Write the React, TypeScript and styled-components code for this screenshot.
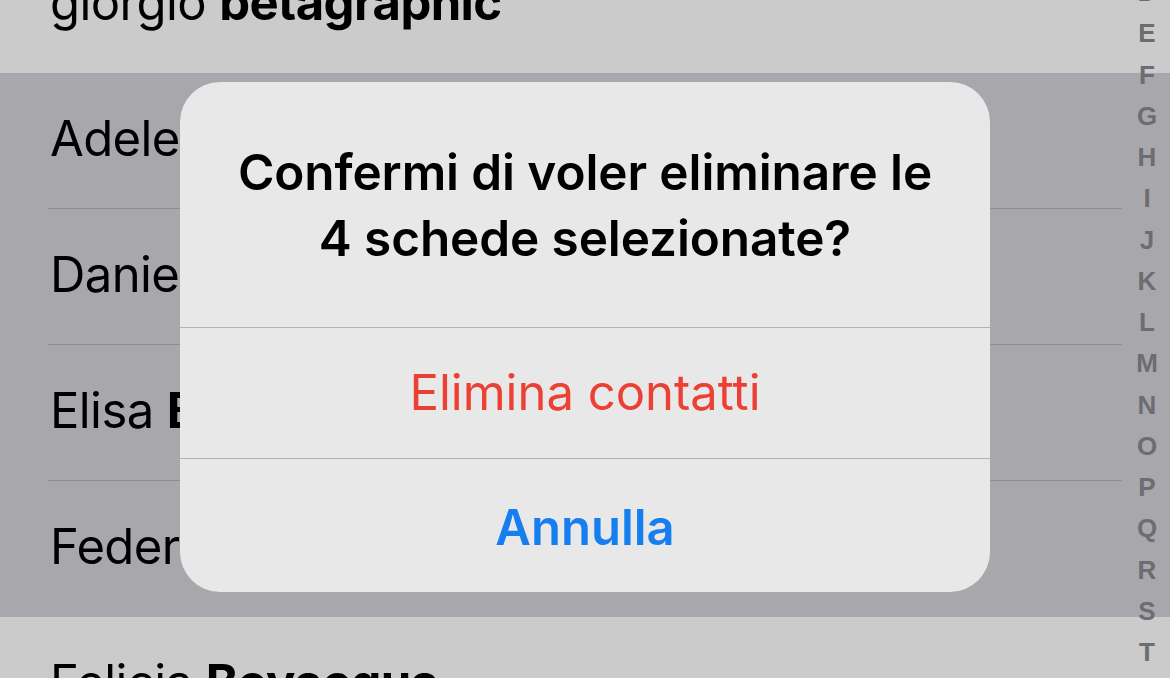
import React from "react";
import styled, { createGlobalStyle } from "styled-components";

const Global = createGlobalStyle`
  html, body { margin: 0; padding: 0; }
  body { width: 1170px; height: 678px; overflow: hidden; background: #cbcbcb; font-family: Inter, "Noto Sans", sans-serif; }
  * { box-sizing: border-box; }
`;

const Screen = styled.div`
  position: relative;
  width: 1170px;
  height: 678px;
  overflow: hidden;
  background: #cbcbcb;
`;

const List = styled.div`
  display: flex;
  flex-direction: column;
  margin-top: -63px;
`;

const Row = styled.div<{ $selected?: boolean; $divider?: boolean }>`
  position: relative;
  height: 136px;
  flex: none;
  display: flex;
  align-items: flex-start;
  padding: 41px 0 0 50px;
  background: ${(p) => (p.$selected ? "#a8a8ac" : "#cbcbcb")};
  &::after {
    content: "";
    display: ${(p) => (p.$divider ? "block" : "none")};
    position: absolute;
    left: 48px;
    right: 48px;
    bottom: 0;
    height: 1px;
    background: #8e8e92;
  }
`;

const Name = styled.span`
  font-size: 49px;
  line-height: 1;
  color: #000;
  font-weight: 400;
  white-space: nowrap;
  letter-spacing: -0.6px;
  b { font-weight: 700; }
`;

const Index = styled.div`
  position: absolute;
  top: -28px;
  right: 3px;
  width: 40px;
  display: flex;
  flex-direction: column;
  align-items: center;
`;

const Letter = styled.span`
  height: 41.25px;
  line-height: 41.25px;
  font-size: 26px;
  font-weight: 700;
  color: #6d6d71;
  font-family: "Liberation Sans", Arial, sans-serif;
`;

const Alert = styled.div`
  position: absolute;
  left: 180px;
  top: 82px;
  width: 810px;
  height: 510px;
  border-radius: 40px;
  background: #e8e8e8;
  display: flex;
  flex-direction: column;
  overflow: hidden;
`;

const Title = styled.div`
  height: 245px;
  padding: 57px 30px 0;
  text-align: center;
  font-size: 49.5px;
  line-height: 66px;
  font-weight: 600;
  color: #000;
  letter-spacing: -0.1px;
`;

const Action = styled.div<{ $tone: "destructive" | "cancel" }>`
  flex: 1;
  display: flex;
  align-items: center;
  justify-content: center;
  border-top: 1px solid #b3b3b5;
  font-size: 49px;
  line-height: 1;
  padding-top: ${(p) => (p.$tone === "cancel" ? "4px" : "0")};
  font-weight: ${(p) => (p.$tone === "cancel" ? 600 : 400)};
  color: ${(p) => (p.$tone === "cancel" ? "#177ef0" : "#eb4033")};
`;

const contacts: { first: string; last: string; selected: boolean; divider: boolean }[] = [
  { first: "giorgio", last: "betagraphic", selected: false, divider: false },
  { first: "Adele", last: "Colombo", selected: true, divider: true },
  { first: "Daniele", last: "Ferri", selected: true, divider: true },
  { first: "Elisa", last: "Bianchi", selected: true, divider: true },
  { first: "Federica", last: "Rossi", selected: true, divider: false },
  { first: "Felicia", last: "Bovacqua", selected: false, divider: false },
];

const letters = "DEFGHIJKLMNOPQRST".split("");

export default function App() {
  return (
    <Screen>
      <Global />
      <List>
        {contacts.map((c) => (
          <Row key={c.first} $selected={c.selected} $divider={c.divider}>
            <Name>
              {c.first} <b>{c.last}</b>
            </Name>
          </Row>
        ))}
      </List>
      <Index>
        {letters.map((l) => (
          <Letter key={l}>{l}</Letter>
        ))}
      </Index>
      <Alert>
        <Title>
          Confermi di voler eliminare le
          <br />4 schede selezionate?
        </Title>
        <Action $tone="destructive">Elimina contatti</Action>
        <Action $tone="cancel">Annulla</Action>
      </Alert>
    </Screen>
  );
}
